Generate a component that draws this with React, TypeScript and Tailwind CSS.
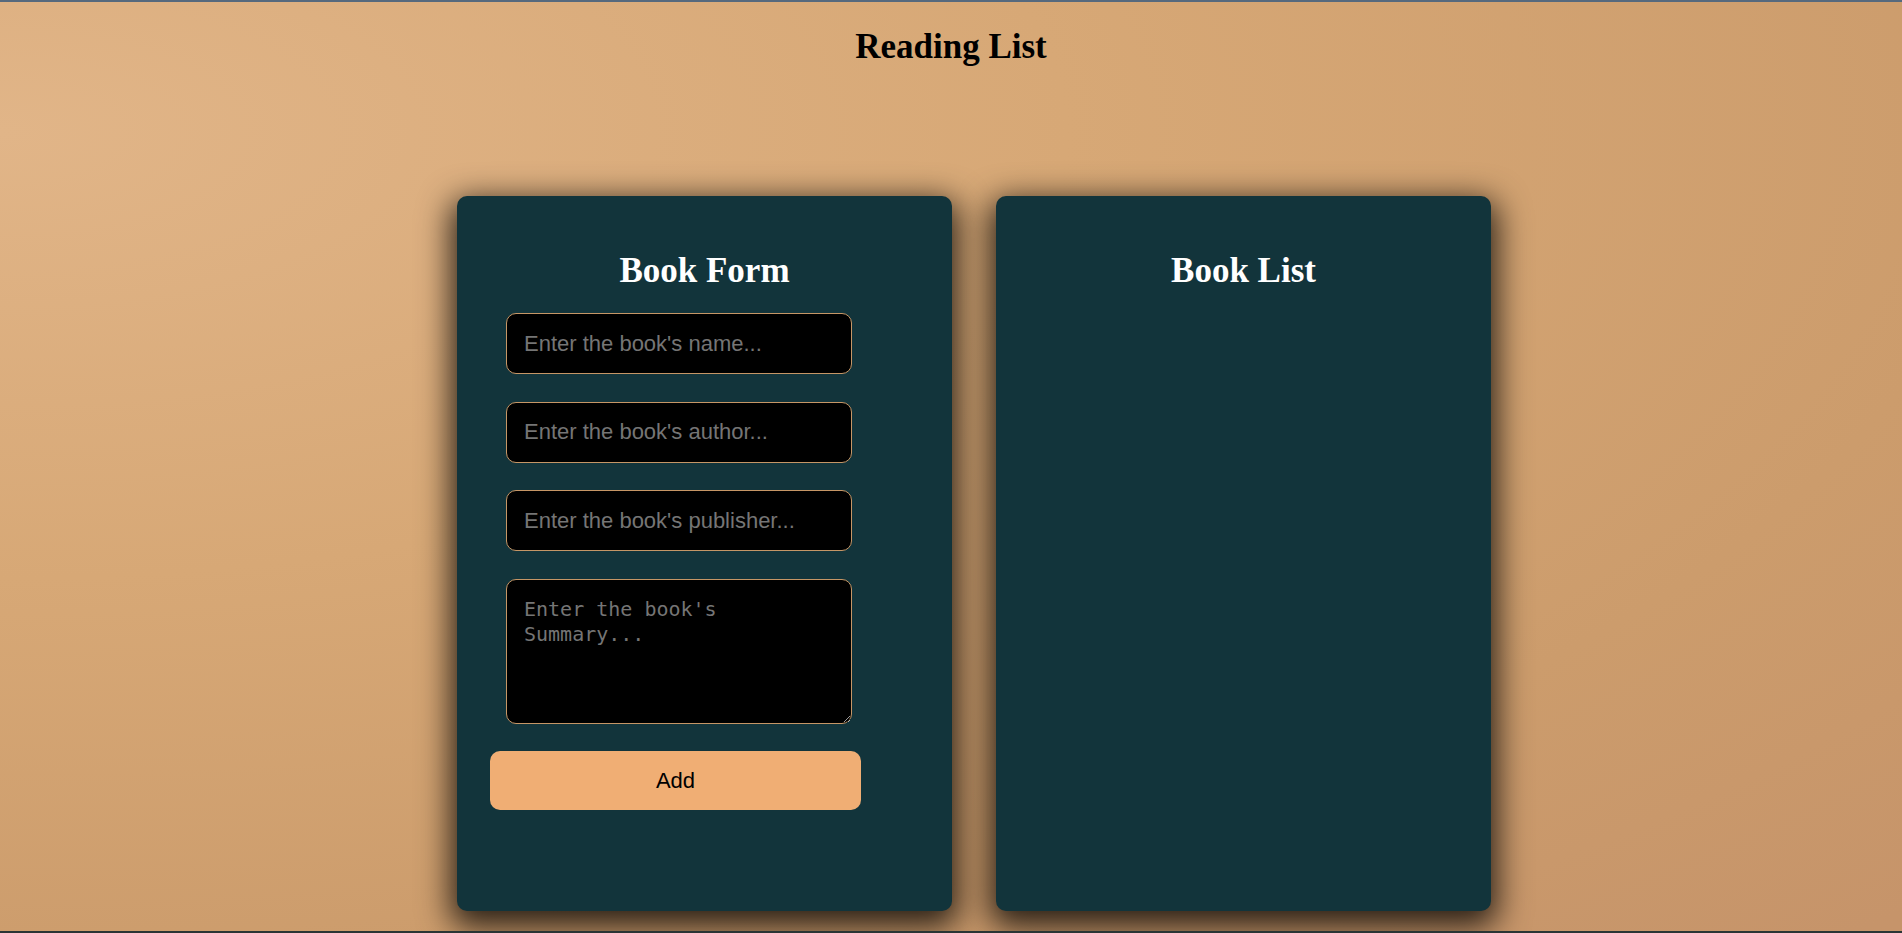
import React from "react";

export default function App() {
  const inputCls =
    "block w-[346px] h-[61px] rounded-[10px] border border-[#c69666] bg-black px-[17px] text-[22px] text-white placeholder:text-[#757575] outline-none [font-family:'Liberation_Sans',Arial,sans-serif]";
  const cardCls =
    "h-[715px] w-[495px] rounded-[10px] bg-[#12343b] pt-[55px] shadow-[0_10px_32px_6px_rgba(0,0,0,0.8)]";
  return (
    <div className="box-border h-[933px] w-full overflow-hidden border-t-2 border-b-2 border-t-[#56697d] border-b-[#2a3535] bg-[radial-gradient(ellipse_140%_120%_at_0%_14%,#e1b588_0%,#d7a876_40%,#cc9c6c_75%,#c6946a_100%)]">
      <h1 className="mt-[25px] text-center text-[35px] font-bold leading-[40px] text-black [font-family:'Liberation_Serif','Times_New_Roman',serif]">
        Reading List
      </h1>
      <div className="mt-[129px] flex justify-center gap-[44px] pl-[46px]">
        <div className={cardCls}>
          <h2 className="text-center text-[35px] font-bold leading-[40px] text-white [font-family:'Liberation_Serif','Times_New_Roman',serif]">
            Book Form
          </h2>
          <form
            className="mt-[22px] flex flex-col gap-[27.5px]"
            onSubmit={(e) => e.preventDefault()}
          >
            <input className={`${inputCls} ml-[49px]`} placeholder="Enter the book's name..." />
            <input className={`${inputCls} ml-[49px]`} placeholder="Enter the book's author..." />
            <input className={`${inputCls} ml-[49px]`} placeholder="Enter the book's publisher..." />
            <textarea
              className="ml-[49px] block h-[145px] w-[346px] rounded-[10px] border border-[#c69666] bg-black p-[17px] text-[20px] leading-[25.7px] text-white placeholder:text-[#757575] outline-none [font-family:'DejaVu_Sans_Mono','Liberation_Mono',monospace]"
              placeholder="Enter the book's Summary..."
            />
            <button
              type="submit"
              className="ml-[33px] h-[59px] w-[371px] rounded-[10px] bg-[#f0ae74] text-[22px] text-black [font-family:'Liberation_Sans',Arial,sans-serif]"
            >
              Add
            </button>
          </form>
        </div>
        <div className={cardCls}>
          <h2 className="text-center text-[35px] font-bold leading-[40px] text-white [font-family:'Liberation_Serif','Times_New_Roman',serif]">
            Book List
          </h2>
        </div>
      </div>
    </div>
  );
}
